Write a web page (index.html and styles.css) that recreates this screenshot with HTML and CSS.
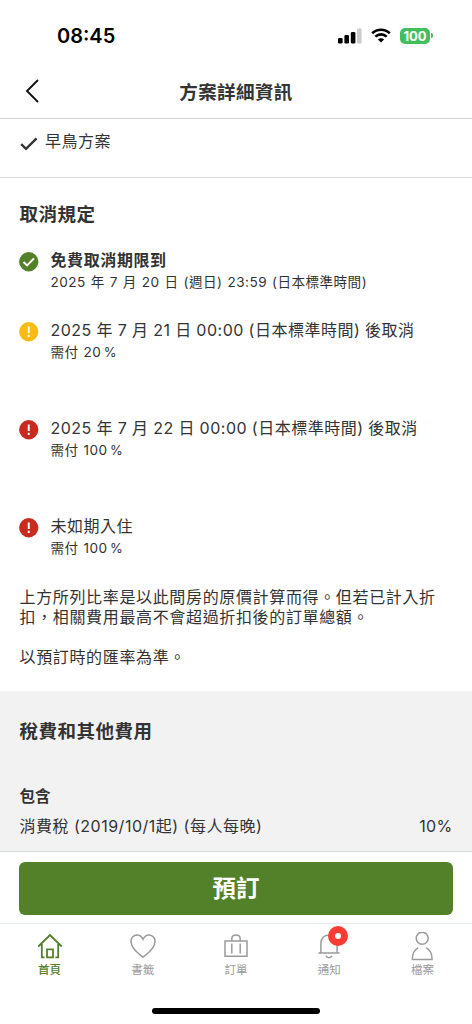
FILE: index.html
```html
<!DOCTYPE html>
<html lang="zh-Hant">
<head>
<meta charset="utf-8">
<meta name="viewport" content="width=device-width, initial-scale=1">
<title>方案詳細資訊</title>
<link rel="stylesheet" href="styles.css">
</head>
<body>
<div class="screen">
  <div class="status">
    <span class="clock">08:45</span>
    <div class="indicators">
      <svg class="signal" width="24" height="16" viewBox="0 0 24 16"><rect x="0" y="10" width="4.6" height="5.6" rx="1.3"/><rect x="6.4" y="7" width="4.6" height="8.6" rx="1.3"/><rect x="12.8" y="4" width="4.6" height="11.6" rx="1.3"/><rect class="faint" x="19" y="0.5" width="4.6" height="15.1" rx="1.3"/></svg>
      <svg class="wifi" width="20" height="15" viewBox="0 0 20 15"><path d="M1.2 5.2C6.2 .5 13.8 .5 18.8 5.2M4.3 8.6c3.3-3 8.1-3 11.4 0" fill="none" stroke="#000" stroke-width="2.6"/><path d="M10 14.4 6.9 11.4c1.8-1.7 4.4-1.7 6.2 0z"/></svg>
      <span class="battery">100</span><span class="battery-tip"></span>
    </div>
  </div>
  <header class="header">
    <svg class="back" width="16" height="26" viewBox="0 0 16 26"><path d="M14 2 3 13 14 24"/></svg>
    <h1>方案詳細資訊</h1>
  </header>
  <div class="feature">
    <svg width="18" height="14" viewBox="0 0 18 14"><path d="M1.2 7.2 6 11.8 16.6 1.4"/></svg>
    <span>早鳥方案</span>
  </div>
  <main class="policy">
    <h2>取消規定</h2>
    <ul class="rules">
      <li class="rule">
        <svg class="mark ok" viewBox="0 0 20 20"><circle cx="10" cy="10" r="9.9"/><path d="M4.6 10.2 8.3 13.8 15.4 6.5"/></svg>
        <div><p class="main strong">免費取消期限到</p><p class="sub">2025 年 7 月 20 日 (週日) 23:59 (日本標準時間)</p></div>
      </li>
      <li class="rule">
        <svg class="mark warn" viewBox="0 0 20 20"><circle cx="10" cy="10" r="9.9"/><path d="M10 4.6V11.4M10 13.1V15.5"/></svg>
        <div><p class="main">2025 年 7 月 21 日 00:00 (日本標準時間) 後取消</p><p class="sub">需付 20<span class="pct">%</span></p></div>
      </li>
      <li class="rule">
        <svg class="mark full" viewBox="0 0 20 20"><circle cx="10" cy="10" r="9.9"/><path d="M10 4.6V11.4M10 13.1V15.5"/></svg>
        <div><p class="main">2025 年 7 月 22 日 00:00 (日本標準時間) 後取消</p><p class="sub">需付 100<span class="pct">%</span></p></div>
      </li>
      <li class="rule">
        <svg class="mark full" viewBox="0 0 20 20"><circle cx="10" cy="10" r="9.9"/><path d="M10 4.6V11.4M10 13.1V15.5"/></svg>
        <div><p class="main">未如期入住</p><p class="sub">需付 100<span class="pct">%</span></p></div>
      </li>
    </ul>
    <p class="note">上方所列比率是以此間房的原價計算而得。但若已計入折<br>扣，相關費用最高不會超過折扣後的訂單總額。</p>
    <p class="note">以預訂時的匯率為準。</p>
  </main>
  <section class="fees">
    <h2>稅費和其他費用</h2>
    <h3>包含</h3>
    <div class="fee"><span>消費稅 (2019/10/1起) (每人每晚)</span><span class="rate">10%</span></div>
  </section>
  <div class="action"><button class="book">預訂</button></div>
  <nav class="tabs">
    <a class="tab active"><svg viewBox="0 0 28 30"><path d="M2.3 14.5 14 3 25.7 14.5M5.8 12V25.4H8.6M22.2 12V25.4H19.4M11 25.3V17.3H17V25.3Z"/></svg><span>首頁</span></a>
    <a class="tab"><svg viewBox="0 0 28 30"><path d="M14 25.3C10.5 22.3 2 16.6 2 9.4 2 5.6 4.7 2.9 8 2.9c2.7 0 4.8 1.6 6 4.4 1.2-2.8 3.3-4.4 6-4.4 3.3 0 6 2.7 6 6.5 0 7.2-8.5 12.9-12 15.9Z"/></svg><span>書籤</span></a>
    <a class="tab"><svg viewBox="0 0 28 30"><path d="M3 9H25V24.3H3ZM9.8 9V6.8C9.8 4.5 11.4 3 14 3s4.2 1.5 4.2 3.8V9M9.8 11.5V21.5M18.2 11.5V21.5"/></svg><span>訂單</span></a>
    <a class="tab"><svg viewBox="0 0 28 30"><path d="M3.4 20.9H24.6M5.9 20.9V11.5C5.9 6.5 9 2.9 14 2.9S22.1 6.5 22.1 11.5V20.9M11 23.7C12 26.3 16 26.3 17 23.7"/></svg><i class="badge"></i><span>通知</span></a>
    <a class="tab"><svg viewBox="0 0 28 30"><circle cx="14.2" cy="6.2" r="6"/><path d="M10.2 15.6C6.5 17.7 4.3 22 4.3 27.5H24.1C24.1 22 21.9 17.7 18.2 15.6"/></svg><span>檔案</span></a>
  </nav>
  <div class="home-indicator"></div>
</div>
</body>
</html>
```
FILE: styles.css
```css
* { box-sizing: border-box; margin: 0; padding: 0; }
body { background: #fff; color: #333; font-family: Inter, "Noto Sans CJK TC", sans-serif; }
.screen { width: 472px; height: 1024px; display: flex; flex-direction: column; overflow: hidden; }
.status { height: 64px; padding: 7px 39px 0 57px; display: flex; justify-content: space-between; align-items: center; color: #000; }
.clock { padding-top: 1px; font-size: 20px; line-height: 24px; font-weight: 600; }
.indicators { display: flex; align-items: center; }
.signal { margin-right: 9px; }
.signal .faint { fill: #ccc; }
.wifi { margin-right: 9px; }
.battery { width: 30px; height: 16px; border-radius: 5px; background: #42bf5d; color: #fff; font-size: 13px; line-height: 16px; font-weight: 700; text-align: center; }
.battery-tip { width: 2px; height: 5px; margin-left: 1px; border-radius: 0 2px 2px 0; background: #42bf5d; }
.header { height: 55px; border-bottom: 1px solid #d4d4d4; display: grid; grid-template-columns: 60px 1fr 60px; align-items: center; }
.back { margin-left: 24px; fill: none; stroke: #111; stroke-width: 1.9; }
h1 { padding-top: 1px; text-align: center; font-size: 18.5px; line-height: 28px; font-weight: 600; letter-spacing: .4px; }
.feature { height: 59px; padding: 9px 20px 0; border-bottom: 1px solid #d8d8d8; display: flex; align-items: flex-start; gap: 7px; font-size: 16px; line-height: 26px; letter-spacing: .5px; }
.feature svg { margin-top: 9px; fill: none; stroke: #333; stroke-width: 2.4; }
.policy { height: 513px; padding: 22px 19.5px 0; }
h2 { font-size: 18.5px; line-height: 28px; font-weight: 600; letter-spacing: .5px; }
.rules { list-style: none; padding-top: 20px; }
.rule { display: flex; gap: 12px; height: 98px; margin-left: -.5px; }
.rule:first-child { height: 70px; }
.rule:last-child { height: 73px; }
.mark { width: 19.5px; height: 19.5px; margin-top: 4px; flex: none; }
.mark path { fill: none; stroke: #fff; stroke-width: 2; }
.ok { fill: #53812a; }
.warn { fill: #f8bb13; }
.full { fill: #c82c20; }
.main { font-size: 16px; line-height: 24px; letter-spacing: .5px; word-spacing: -.3px; white-space: nowrap; }
.strong { font-weight: 600; letter-spacing: .6px; }
.sub { font-size: 13.6px; line-height: 20px; letter-spacing: .45px; word-spacing: .7px; white-space: nowrap; }
.pct { margin-left: 2.5px; font-size: 13px; }
.note { font-size: 16px; line-height: 20px; letter-spacing: .65px; margin-bottom: 20px; white-space: nowrap; }
.fees { height: 161px; padding: 26px 19.5px 0; background: #f2f2f2; border-bottom: 1px solid #d5dae0; }
h3 { margin-top: 40px; font-size: 15.5px; line-height: 24px; font-weight: 600; }
.fee { display: flex; justify-content: space-between; margin-top: 5px; font-size: 16px; line-height: 24px; letter-spacing: .5px; }
.rate { letter-spacing: .3px; }
.action { height: 71px; padding: 10px 19px 0; }
.book { display: block; width: 434px; height: 53px; padding-top: 1px; border: 0; border-radius: 6px; background: #53812a; color: #fff; font: 600 23.5px/52px Inter, "Noto Sans CJK TC", sans-serif; }
.tabs { height: 85px; border-top: 1px solid #e6ebef; padding: 0 3px; display: grid; grid-template-columns: repeat(5, 1fr); }
.tab { position: relative; padding-top: 8px; display: flex; flex-direction: column; align-items: center; color: #9b9b9b; font-size: 11.5px; line-height: 16px; }
.tab svg { width: 28px; height: 30px; fill: none; stroke: currentColor; stroke-width: 1.5; }
.active { color: #53812a; font-weight: 500; }
.active svg { stroke-width: 1.8; }
.badge { position: absolute; left: calc(50% - 1px); top: 2px; width: 20px; height: 20px; border: 7.5px solid #fa3c32; border-radius: 50%; background: #fff; }
.home-indicator { width: 168px; height: 6px; border-radius: 3px; background: #000; align-self: center; }
```
